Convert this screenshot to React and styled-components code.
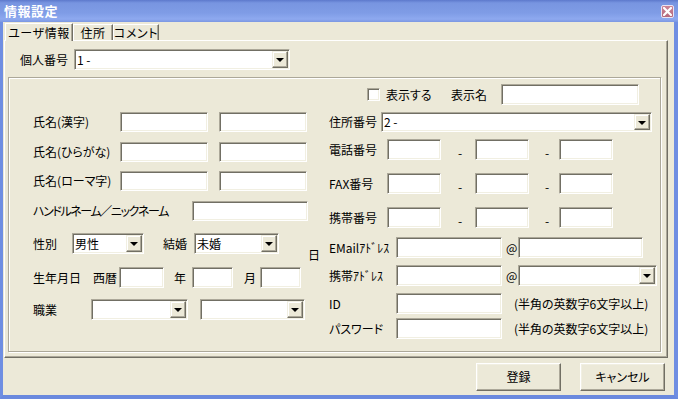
import React from "react";
import styled, { createGlobalStyle } from "styled-components";

const GlobalStyle = createGlobalStyle`
  html, body {
    margin: 0;
    padding: 0;
    background: #ece9d8;
  }
  body {
    font-family: "Noto Sans CJK JP", "Liberation Sans", sans-serif;
    font-size: 12px;
    line-height: 14px;
    color: #000;
  }
  * {
    box-sizing: border-box;
  }
`;

const Window = styled.div`
  width: 678px;
  height: 399px;
  display: flex;
  flex-direction: column;
  background: #ece9d8;
  font-feature-settings: "palt";
`;

const TitleBar = styled.div`
  height: 22px;
  flex-shrink: 0;
  display: flex;
  align-items: center;
  justify-content: space-between;
  padding: 0 4px 0 4px;
  background: linear-gradient(
    to bottom,
    #5d79cc 0px,
    #7895e1 3px,
    #7f9ce6 13px,
    #8ea9ef 19px,
    #7b97e2 22px
  );
`;

const Title = styled.span`
  color: #fff;
  font-weight: bold;
  font-size: 13px;
  letter-spacing: 0.5px;
`;

const CloseButton = styled.div`
  width: 13px;
  height: 13px;
  display: flex;
  align-items: center;
  justify-content: center;
  border: 1px solid #e9e4f2;
  border-radius: 2px;
  background: linear-gradient(to bottom, #cc8597, #b4687c);
`;

const Frame = styled.div`
  flex: 1;
  display: flex;
  flex-direction: column;
  border-left: 3px solid #6f8ee2;
  border-right: 4px solid #6f8ee2;
  border-bottom: 4px solid #6a89de;
`;

const TabStrip = styled.div`
  height: 18px;
  flex-shrink: 0;
  display: flex;
  align-items: flex-end;
  padding-left: 2px;
`;

const Tab = styled.div`
  position: relative;
  width: ${({ $w }) => $w}px;
  height: ${({ $active }) => ($active ? 18 : 16)}px;
  margin-bottom: ${({ $active }) => ($active ? -1 : 0)}px;
  z-index: ${({ $active }) => ($active ? 2 : 1)};
  display: flex;
  align-items: center;
  justify-content: center;
  background: #ece9d8;
  border-top: 1px solid #fff;
  border-left: 1px solid #fff;
  border-right: 1px solid #716f64;
  box-shadow: inset -1px 0 #aca899;
  letter-spacing: 0.6px;
  white-space: nowrap;
`;

const Panel = styled.div`
  margin-left: 1px;
  width: 664px;
  height: 318px;
  flex-shrink: 0;
  padding-top: 8px;
  border: 1px solid;
  border-color: #fff #716f64 #716f64 #fff;
  box-shadow: inset -1px -1px #aca899;
`;

const TopRow = styled.div`
  height: 21px;
  display: flex;
  align-items: center;
  padding-left: 15px;
`;

const GroupBox = styled.div`
  margin: 7px 0 0 3px;
  width: 653px;
  height: 275px;
  display: flex;
  padding-left: 24px;
  border: 1px solid #aca899;
  box-shadow: inset 1px 1px #fff, 1px 1px #fff;
`;

const Column = styled.div`
  display: flex;
  flex-direction: column;
  width: ${({ $w }) => ($w ? `${$w}px` : "auto")};
  padding-top: ${({ $top }) => $top}px;
  margin-left: ${({ $left }) => $left || 0}px;
`;

const Row = styled.div`
  height: ${({ $h }) => $h || 21}px;
  margin-top: ${({ $mt }) => $mt || 0}px;
  padding-left: ${({ $pl }) => $pl || 0}px;
  display: flex;
  align-items: center;
  flex-shrink: 0;
`;

const Label = styled.span`
  width: ${({ $w }) => $w}px;
  flex-shrink: 0;
  padding-left: ${({ $pl }) => $pl || 0}px;
  letter-spacing: ${({ $tight }) => ($tight ? "-1.4px" : "normal")};
  white-space: nowrap;
`;

const Note = styled.span`
  margin-left: ${({ $ml }) => $ml}px;
  white-space: nowrap;
`;

const Dash = styled.span`
  width: ${({ $w }) => $w}px;
  flex-shrink: 0;
  padding: 7px 0 0 ${({ $pl }) => $pl}px;
`;

const Field = styled.div`
  width: ${({ $w }) => $w}px;
  height: 100%;
  flex-shrink: 0;
  margin-left: ${({ $ml }) => $ml || 0}px;
  display: flex;
  align-items: center;
  background: #fff;
  border: 1px solid;
  border-color: #aca899 #fff #fff #aca899;
  box-shadow: inset 1px 1px #716f64, inset -1px -1px #f1efe2;
`;

const ComboText = styled.span`
  flex: 1;
  padding-left: 2px;
  white-space: nowrap;
`;

const DropButton = styled.div`
  width: 16px;
  align-self: stretch;
  margin: 1px 1px 1px 0;
  display: flex;
  align-items: center;
  justify-content: center;
  background: #ece9d8;
  border: 1px solid;
  border-color: #f1efe2 #716f64 #716f64 #f1efe2;
  box-shadow: inset -1px -1px #aca899, inset 1px 1px #fff;

  &::after {
    content: "";
    border-left: 4px solid transparent;
    border-right: 4px solid transparent;
    border-top: 4px solid #000;
    margin-top: 1px;
  }
`;

const CheckBox = styled.div`
  width: 13px;
  height: 13px;
  flex-shrink: 0;
  background: #fff;
  border: 1px solid;
  border-color: #aca899 #fff #fff #aca899;
  box-shadow: inset 1px 1px #716f64, inset -1px -1px #f1efe2;
  margin-right: 6px;
`;

const DayMark = styled.span`
  width: 12px;
  text-align: center;
`;

const ButtonBar = styled.div`
  display: flex;
  justify-content: flex-end;
  gap: 19px;
  padding: 5px 9px 0 0;
`;

const Button = styled.div`
  width: ${({ $w }) => $w}px;
  height: 28px;
  display: flex;
  align-items: center;
  justify-content: center;
  background: #ece9d8;
  border: 1px solid;
  border-color: #fff #716f64 #716f64 #fff;
  box-shadow: inset -1px -1px #aca899, inset 1px 1px #f1efe2;
`;

function Combo({ w, ml, value }) {
  return (
    <Field $w={w} $ml={ml}>
      <ComboText>{value}</ComboText>
      <DropButton />
    </Field>
  );
}

function PhoneRow({ label, mt }) {
  return (
    <Row $mt={mt}>
      <Label $w={58}>{label}</Label>
      <Field $w={54} />
      <Dash $w={34} $pl={17}>-</Dash>
      <Field $w={54} />
      <Dash $w={30} $pl={16}>-</Dash>
      <Field $w={54} />
    </Row>
  );
}

export default function App() {
  return (
    <>
      <GlobalStyle />
      <Window>
        <TitleBar>
          <Title>情報設定</Title>
          <CloseButton>
            <svg width="9" height="9" viewBox="0 0 9 9">
              <path d="M1 1L8 8M8 1L1 8" stroke="#fff" strokeWidth="2.2" strokeLinecap="square" />
            </svg>
          </CloseButton>
        </TitleBar>
        <Frame>
          <TabStrip>
            <Tab $w={68} $active>ユーザ情報</Tab>
            <Tab $w={40}>住所</Tab>
            <Tab $w={46}>コメント</Tab>
          </TabStrip>
          <Panel>
            <TopRow>
              <Label $w={54}>個人番号</Label>
              <Combo w={216} value="1 -" />
            </TopRow>
            <GroupBox>
              <Column $w={275} $top={34}>
                <Row $h={20}>
                  <Label $w={87}>氏名(漢字)</Label>
                  <Field $w={88} />
                  <Field $w={88} $ml={11} />
                </Row>
                <Row $h={20} $mt={10}>
                  <Label $w={87}>氏名(ひらがな)</Label>
                  <Field $w={88} />
                  <Field $w={88} $ml={11} />
                </Row>
                <Row $h={20} $mt={9}>
                  <Label $w={87}>氏名(ローマ字)</Label>
                  <Field $w={88} />
                  <Field $w={88} $ml={11} />
                </Row>
                <Row $h={20} $mt={10}>
                  <Label $w={159} $tight>ハンドルネーム／ニックネーム</Label>
                  <Field $w={116} />
                </Row>
                <Row $mt={12}>
                  <Label $w={39}>性別</Label>
                  <Combo w={72} value="男性" />
                  <Label $w={50} $pl={19}>結婚</Label>
                  <Combo w={85} value="未婚" />
                </Row>
                <Row $mt={13}>
                  <Label $w={60}>生年月日</Label>
                  <Label $w={26}>西暦</Label>
                  <Field $w={45} />
                  <Label $w={28} $pl={10}>年</Label>
                  <Field $w={41} />
                  <Label $w={27} $pl={11}>月</Label>
                  <Field $w={41} />
                </Row>
                <Row $mt={11}>
                  <Label $w={58}>職業</Label>
                  <Combo w={97} />
                  <Combo w={105} ml={12} />
                </Row>
              </Column>
              <Column $w={12} $top={170}>
                <DayMark>日</DayMark>
              </Column>
              <Column $left={9} $top={6}>
                <Row $pl={38}>
                  <CheckBox />
                  <Label $w={65}>表示する</Label>
                  <Label $w={50}>表示名</Label>
                  <Field $w={138} />
                </Row>
                <Row $h={20} $mt={7}>
                  <Label $w={52}>住所番号</Label>
                  <Combo w={271} value="2 -" />
                </Row>
                <PhoneRow label="電話番号" mt={7} />
                <PhoneRow label="FAX番号" mt={13} />
                <PhoneRow label="携帯番号" mt={13} />
                <Row $mt={9}>
                  <Label $w={67}>EMailｱﾄﾞﾚｽ</Label>
                  <Field $w={106} />
                  <Label $w={16} $pl={4}>@</Label>
                  <Field $w={125} />
                </Row>
                <Row $mt={7}>
                  <Label $w={67}>携帯ｱﾄﾞﾚｽ</Label>
                  <Field $w={106} />
                  <Label $w={16} $pl={4}>@</Label>
                  <Combo w={139} />
                </Row>
                <Row $mt={7}>
                  <Label $w={67}>ID</Label>
                  <Field $w={106} />
                  <Note $ml={12}>(半角の英数字6文字以上)</Note>
                </Row>
                <Row $mt={4}>
                  <Label $w={67}>パスワード</Label>
                  <Field $w={106} />
                  <Note $ml={12}>(半角の英数字6文字以上)</Note>
                </Row>
              </Column>
            </GroupBox>
          </Panel>
          <ButtonBar>
            <Button $w={85}>登録</Button>
            <Button $w={85}>キャンセル</Button>
          </ButtonBar>
        </Frame>
      </Window>
    </>
  );
}
